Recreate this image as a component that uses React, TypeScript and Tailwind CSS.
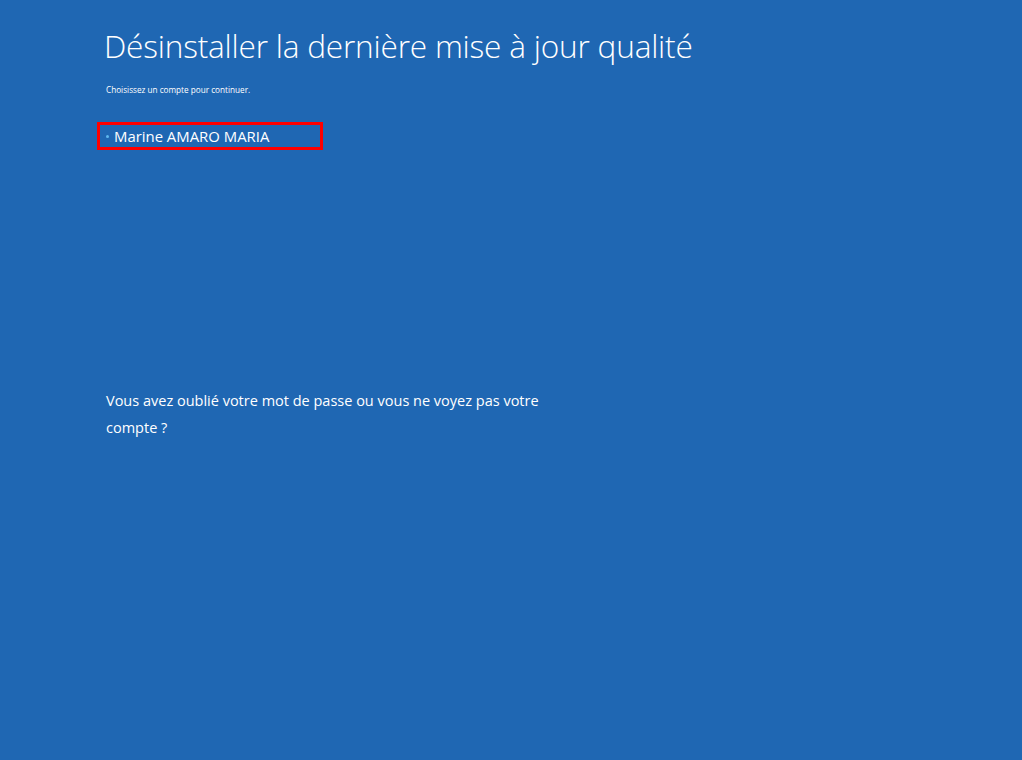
export default function App() {
  return (
    <div
      className="w-[1022px] h-[760px] bg-[#1f67b3] text-white flex flex-col pl-[104px] pt-[26px]"
      style={{ fontFamily: '"Open Sans", "Noto Sans", sans-serif' }}
    >
      {/* Title */}
      <h1 className="text-[31.6px] font-light leading-[40px] tracking-[-0.2px]">
        Désinstaller la dernière mise à jour qualité
      </h1>

      <p className="mt-[19px] ml-[2px] text-[8.2px] leading-[10px]">Choisissez un compte pour continuer.</p>

      {/* Account list */}
      <div className="mt-[27px] -ml-[7px] w-[226px] h-[28px] border-[3px] border-[#ff0000] flex items-center pl-[6px] gap-[5px]">
        <span className="w-[3px] h-[3px] rounded-full bg-[#5fb8ee]" />
        <span className="text-[14.9px] leading-none">Marine AMARO MARIA</span>
      </div>

      {/* Forgot password */}
      <p className="mt-[237px] ml-[2px] w-[470px] text-[14.5px] leading-[27px]">
        Vous avez oublié votre mot de passe ou vous ne voyez pas votre compte ?
      </p>
    </div>
  );
}
